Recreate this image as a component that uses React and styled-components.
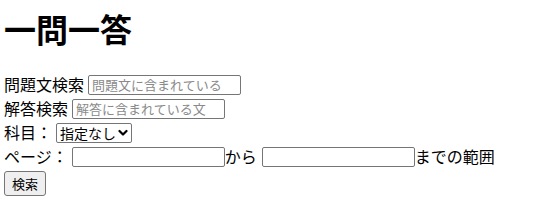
import styled, { createGlobalStyle } from 'styled-components';

const GlobalStyle = createGlobalStyle`
  body {
    margin: 0;
    padding: 0 4px;
    background: #fff;
    color: #000;
    font-family: "Noto Sans CJK JP", "Liberation Sans", sans-serif;
    font-size: 16px;
  }
`;

const Title = styled.h1`
  font-size: 32px;
  font-weight: bold;
  margin: 8px 0 26px;
  line-height: 40px;
`;

const Form = styled.form`
  display: flex;
  flex-direction: column;
  gap: 3px;
`;

const Row = styled.div`
  display: flex;
  align-items: center;
  height: 21px;
  line-height: 21px;
  white-space: nowrap;
`;

const Label = styled.span`
  margin-right: ${(p) => p.$gap ?? 4}px;
`;

const TextInput = styled.input`
  box-sizing: border-box;
  width: 153px;
  height: 20px;
  padding: 1px 3px;
  border: 1px solid #767676;
  border-radius: 2px;
  font-family: "Noto Sans CJK JP", sans-serif;
  font-size: 13px;
  &::placeholder {
    color: #8a8a8a;
  }
`;

const SelectWrap = styled.span`
  position: relative;
  display: inline-flex;
`;

const Select = styled.select`
  box-sizing: border-box;
  appearance: none;
  height: 20px;
  width: 76px;
  padding: 0 0 0 3px;
  border: 1px solid #767676;
  border-radius: 2px;
  background: #fff;
  font-family: "Noto Sans CJK JP", sans-serif;
  font-size: 14px;
  line-height: 18px;
  color: #000;
`;

const Chevron = styled.svg`
  position: absolute;
  right: 4px;
  top: 6px;
  width: 10px;
  height: 8px;
  pointer-events: none;
`;

const Button = styled.button`
  box-sizing: border-box;
  width: 42px;
  height: 25px;
  padding: 0;
  border: 1px solid #767676;
  border-radius: 3px;
  background: #efefef;
  font-family: "Noto Sans CJK JP", sans-serif;
  font-size: 13px;
  color: #000;
`;

export default function App() {
  return (
    <>
      <GlobalStyle />
      <Title>一問一答</Title>
      <Form onSubmit={(e) => e.preventDefault()}>
        <Row>
          <Label>問題文検索</Label>
          <TextInput placeholder="問題文に含まれている" />
        </Row>
        <Row>
          <Label>解答検索</Label>
          <TextInput placeholder="解答に含まれている文" />
        </Row>
        <Row>
          <Label>科目：</Label>
          <SelectWrap>
            <Select defaultValue="">
              <option value="">指定なし</option>
            </Select>
            <Chevron viewBox="0 0 10 8">
              <path d="M1.5 2 L5 5.5 L8.5 2" fill="none" stroke="#000" strokeWidth="2.2" strokeLinecap="round" strokeLinejoin="round" />
            </Chevron>
          </SelectWrap>
        </Row>
        <Row>
          <Label>ページ：</Label>
          <TextInput />
          <Label $gap={5}>から</Label>
          <TextInput />
          <span>までの範囲</span>
        </Row>
        <div>
          <Button type="submit">検索</Button>
        </div>
      </Form>
    </>
  );
}
